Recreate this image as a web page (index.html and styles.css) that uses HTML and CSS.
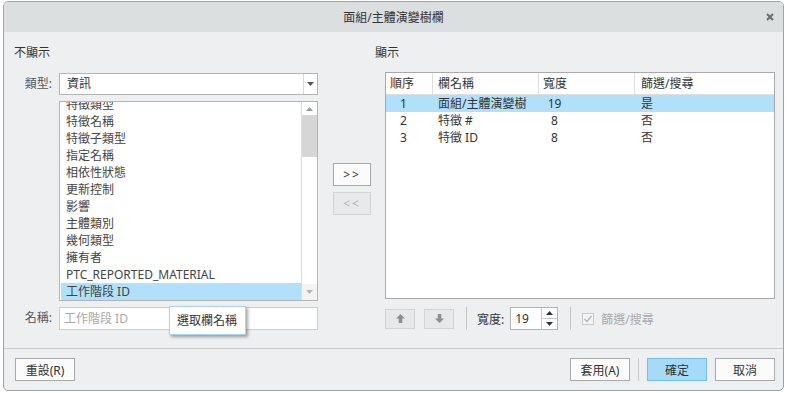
FILE: index.html
```html
<!DOCTYPE html>
<html lang="zh-Hant">
  <head>
    <meta charset="UTF-8" />
    <meta name="viewport" content="width=device-width, initial-scale=1.0" />
    <title>面組/主體演變樹欄</title>
    <link rel="stylesheet" href="styles.css">
  </head>
  <body>
    <div class="dialog">
      <!-- 標題列 -->
      <div class="titlebar">
        <span></span>
        <span class="title">面組/主體演變樹欄</span>
        <span class="close">
          <svg width="8" height="8" viewBox="0 0 8 8"><path d="M1 1 L7 7 M7 1 L1 7" stroke="#6b6b6b" stroke-width="2"/></svg>
        </span>
      </div>

      <div class="main">
        <!-- 不顯示 -->
        <div class="left">
          <div class="heading">不顯示</div>
          <div class="form">
            <label>類型:</label>
            <div class="select">
              <span class="value">資訊</span>
              <span class="drop">
                <svg width="7" height="4" viewBox="0 0 7 4"><path d="M0 0 H7 L3.5 4 Z" fill="#555"/></svg>
              </span>
            </div>

            <span></span>
            <div class="list">
              <ul class="items">
                <li>特徵類型</li>
                <li>特徵名稱</li>
                <li>特徵子類型</li>
                <li>指定名稱</li>
                <li>相依性狀態</li>
                <li>更新控制</li>
                <li>影響</li>
                <li>主體類別</li>
                <li>幾何類型</li>
                <li>擁有者</li>
                <li>PTC_REPORTED_MATERIAL</li>
                <li class="selected">工作階段 ID</li>
              </ul>
              <div class="scroll">
                <span class="sb-up">
                  <svg width="7" height="4" viewBox="0 0 7 4"><path d="M0 4 H7 L3.5 0 Z" fill="#9a9a9a"/></svg>
                </span>
                <span class="thumb"></span>
                <span class="track"></span>
                <span class="sb-down">
                  <svg width="7" height="4" viewBox="0 0 7 4"><path d="M0 0 H7 L3.5 4 Z" fill="#b5b5b5"/></svg>
                </span>
              </div>
            </div>

            <label>名稱:</label>
            <div class="name-field">
              <input type="text" placeholder="工作階段 ID" />
              <div class="tooltip">選取欄名稱</div>
            </div>
          </div>
        </div>

        <!-- 移動按鈕 -->
        <div class="middle">
          <button class="btn move">&gt;&gt;</button>
          <button class="btn move disabled">&lt;&lt;</button>
        </div>

        <!-- 顯示 -->
        <div class="right">
          <div class="heading">顯示</div>
          <div class="table">
            <div class="row head">
              <span>順序</span>
              <span>欄名稱</span>
              <span>寬度</span>
              <span>篩選/搜尋</span>
            </div>
            <div class="row selected">
              <span class="c-num">1</span>
              <span class="c-name">面組/主體演變樹</span>
              <span class="c-width"><i>19</i></span>
              <span class="c-filter">是</span>
            </div>
            <div class="row">
              <span class="c-num">2</span>
              <span class="c-name">特徵 #</span>
              <span class="c-width"><i>8</i></span>
              <span class="c-filter">否</span>
            </div>
            <div class="row">
              <span class="c-num">3</span>
              <span class="c-name">特徵 ID</span>
              <span class="c-width"><i>8</i></span>
              <span class="c-filter">否</span>
            </div>
          </div>

          <div class="tools">
            <span class="arrow-btn up">
              <svg width="11" height="11" viewBox="0 0 11 11"><path d="M5.5 1 L10 5.5 H7.3 V10 H3.7 V5.5 H1 Z" fill="#8e8e8e"/></svg>
            </span>
            <span class="arrow-btn down">
              <svg width="11" height="11" viewBox="0 0 11 11"><path d="M5.5 10 L10 5.5 H7.3 V1 H3.7 V5.5 H1 Z" fill="#8e8e8e"/></svg>
            </span>
            <span class="vsep"></span>
            <span class="tool-label">寬度:</span>
            <div class="spin">
              <span class="val">19</span>
              <span class="arrows">
                <span><svg width="7" height="4" viewBox="0 0 7 4"><path d="M0 4 H7 L3.5 0 Z" fill="#333"/></svg></span>
                <span><svg width="7" height="4" viewBox="0 0 7 4"><path d="M0 0 H7 L3.5 4 Z" fill="#333"/></svg></span>
              </span>
            </div>
            <span class="vsep"></span>
            <span class="check">
              <svg width="10" height="10" viewBox="0 0 10 10"><path d="M1.5 5 L4 7.5 L8.5 2" fill="none" stroke="#b3b3b3" stroke-width="1.3"/></svg>
            </span>
            <span class="check-label">篩選/搜尋</span>
          </div>
        </div>
      </div>

      <!-- 底部按鈕 -->
      <div class="footer">
        <button class="btn">重設(R)</button>
        <span class="spacer"></span>
        <button class="btn">套用(A)</button>
        <span class="vsep"></span>
        <button class="btn primary">確定</button>
        <button class="btn">取消</button>
      </div>
    </div>
  </body>
</html>
```

FILE: styles.css
```css
* {
  box-sizing: border-box;
}
body {
  margin: 0;
  background: #fff;
  font-family: "Noto Sans", "Noto Sans CJK TC", sans-serif;
  font-size: 12px;
  color: #333;
}
.dialog {
  margin: 1px 0 0 3px;
  width: 781px;
  height: 390px;
  border: 1px solid #a3a3a3;
  border-radius: 5px;
  background: #eeeff1;
  display: flex;
  flex-direction: column;
  overflow: hidden;
}

/* 標題列 */
.titlebar {
  height: 30px;
  flex: none;
  background: #dcdfe0;
  display: grid;
  grid-template-columns: 1fr auto 1fr;
  align-items: center;
}
.close {
  justify-self: end;
  margin-right: 9px;
  display: flex;
}

.main {
  flex: 1;
  display: flex;
  padding: 13px 7px 0 10px;
}
.heading {
  height: 16px;
  line-height: 16px;
  margin-bottom: 12px;
}

/* 左側 */
.left {
  width: 304px;
}
.form {
  display: grid;
  grid-template-columns: 38px 259px;
  grid-template-rows: 22px 200px 23px;
  column-gap: 7px;
  row-gap: 6px;
}
.form label {
  text-align: right;
  line-height: 22px;
  color: #555;
}
.select {
  display: flex;
  background: #fff;
  border: 1px solid #b4b4b4;
}
.select .value {
  flex: 1;
  padding-left: 7px;
  line-height: 20px;
}
.select .drop {
  width: 14px;
  border-left: 1px solid #d9d9d9;
  display: flex;
  align-items: center;
  justify-content: center;
}
.list {
  display: flex;
  background: #fff;
  border: 1px solid #b4b4b4;
  overflow: hidden;
}
.items {
  list-style: none;
  margin: -6px 0 0;
  padding: 0 0 0 1px;
  width: 241px;
  flex: none;
}
.items li {
  height: 17px;
  line-height: 17px;
  padding-left: 5px;
  white-space: nowrap;
  color: #444;
}
.items li.selected {
  background: #b0e0fa;
}
.scroll {
  width: 16px;
  flex: none;
  border-left: 1px solid #dcdcdc;
  display: flex;
  flex-direction: column;
}
.sb-up,
.sb-down {
  display: flex;
  align-items: center;
  justify-content: center;
}
.sb-up {
  height: 13px;
}
.sb-down {
  height: 16px;
  background: #f3f3f3;
}
.thumb {
  height: 42px;
  background: #d6d6d6;
}
.track {
  flex: 1;
}
.name-field {
  position: relative;
}
.name-field input {
  width: 100%;
  height: 23px;
  border: 1px solid #cdcdcd;
  background: #fff;
  padding: 0 4px;
  font: inherit;
  color: #333;
  outline: none;
}
.name-field input::placeholder {
  color: #a8a8a8;
}
.tooltip {
  position: absolute;
  left: 110px;
  top: -1px;
  width: 77px;
  height: 29px;
  padding-left: 7px;
  line-height: 27px;
  background: #fff;
  border: 1px solid #a9d4ef;
  box-shadow: 2px 2px 3px rgba(0, 0, 0, 0.35);
  white-space: nowrap;
}

/* 中間 */
.middle {
  margin-left: 15px;
  width: 38px;
  padding-top: 118px;
  display: flex;
  flex-direction: column;
  gap: 6px;
}
.btn {
  width: 60px;
  height: 23px;
  border: 1px solid #a9a9a9;
  background: #fbfbfb;
  font: inherit;
  color: #333;
  padding: 0;
}
.btn.move {
  width: 38px;
  letter-spacing: 2px;
}
.btn.disabled {
  background: #e8e9ea;
  border-color: #d3d3d3;
  color: #b0b0b0;
}
.btn.primary {
  background: #a5dbf8;
  border-color: #6fc0ee;
}

/* 右側 */
.right {
  margin-left: 4px;
  width: 400px;
  display: flex;
  flex-direction: column;
}
.right .heading {
  margin-bottom: 11px;
}
.table {
  margin-left: 10px;
  height: 227px;
  border: 1px solid #a9a9a9;
  background: #fff;
}
.row {
  display: grid;
  grid-template-columns: 47px 106px 96px 1fr;
  height: 17px;
  line-height: 17px;
  white-space: nowrap;
}
.row.head {
  height: 22px;
  line-height: 21px;
  border-bottom: 1px solid #dedede;
}
.head span {
  border-right: 1px solid #dedede;
  padding-left: 4px;
}
.head span:nth-child(2) {
  padding-left: 5px;
}
.head span:last-child {
  border-right: none;
  padding-left: 6px;
}
.row.selected {
  background: #b0e0fa;
}
.c-num {
  padding-left: 14px;
}
.c-name {
  padding-left: 5px;
}
.c-width {
  padding-left: 8px;
}
.c-width i {
  font-style: normal;
  display: inline-block;
  width: 15px;
  text-align: center;
}
.c-filter {
  padding-left: 6px;
}

.tools {
  margin-top: 8px;
  margin-left: 10px;
  height: 23px;
  display: flex;
  align-items: center;
}
.arrow-btn {
  width: 30px;
  height: 20px;
  border: 1px solid #d3d3d3;
  background: #e7e8ea;
  display: flex;
  align-items: center;
  justify-content: center;
}
.arrow-btn.down {
  margin-left: 9px;
}
.vsep {
  width: 1px;
  height: 23px;
  background: #c4c4c4;
  margin: 0 10px 0 12px;
}
.tool-label {
  margin-right: 6px;
}
.spin {
  display: flex;
  width: 48px;
  height: 23px;
  border: 1px solid #b4b4b4;
  background: #fff;
}
.spin .val {
  flex: 1;
  padding-left: 4px;
  line-height: 21px;
}
.spin .arrows {
  width: 16px;
  border-left: 1px solid #c8c8c8;
  display: flex;
  flex-direction: column;
}
.spin .arrows span {
  flex: 1;
  display: flex;
  align-items: center;
  justify-content: center;
}
.spin .arrows span:first-child {
  border-bottom: 1px solid #c8c8c8;
}
.check {
  width: 12px;
  height: 12px;
  margin-left: 1px;
  border: 1px solid #c8c8c8;
  background: #f4f4f4;
  display: flex;
  align-items: center;
  justify-content: center;
}
.check-label {
  margin-left: 7px;
  color: #a9a9a9;
}

/* 底部 */
.footer {
  flex: none;
  border-top: 1px solid #c9c9c9;
  display: flex;
  align-items: center;
  padding: 9px 8px 9px 11px;
}
.spacer {
  flex: 1;
}
.footer .vsep {
  margin: 0 8px;
  background: #cacaca;
}
.footer .btn.primary {
  margin-right: 8px;
}
```
